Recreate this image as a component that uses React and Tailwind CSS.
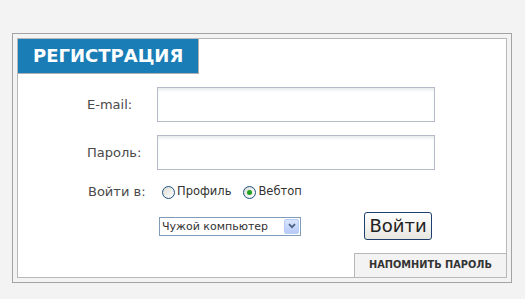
import React, { useState } from "react";

function Radio({ checked, onClick, label }) {
  return (
    <label onClick={onClick} className="flex items-center cursor-pointer">
      <span className="w-[13px] h-[13px] rounded-full border border-[#1c5180] bg-gradient-to-br from-[#dcdcd5] to-white flex items-center justify-center">
        {checked && <span className="w-[5px] h-[5px] rounded-full bg-[#21a121]" />}
      </span>
      <span className="ml-[2px] text-[11.5px] text-[#333]">{label}</span>
    </label>
  );
}

export default function App() {
  const [target, setTarget] = useState("webtop");

  return (
    <div
      className="min-h-screen bg-[#f3f3f3] pt-[33px] pl-[12px]"
      style={{ fontFamily: '"DejaVu Sans", Verdana, sans-serif' }}
    >
      <div className="w-[500px] h-[250px] border border-[#a3a3a3] p-[4px]">
        <div className="h-full border border-[#b8b8b8] bg-white flex flex-col">
          {/* header */}
          <div className="w-[181px] h-[35px] bg-[#1a7db6] border-r border-b border-[#b0b0b0] pl-[15px] flex items-center">
            <span className="text-white font-bold text-[18px] leading-none">РЕГИСТРАЦИЯ</span>
          </div>

          {/* email */}
          <div className="flex items-center mt-[13px] pl-[69px]">
            <span className="w-[70px] text-[13px] text-[#4a4a4a]">E-mail:</span>
            <input className="w-[278px] h-[35px] border border-[#b7bac9] bg-white shadow-[inset_0_3px_3px_-1px_rgba(60,80,100,0.12)] outline-none px-2 text-[13px]" />
          </div>

          {/* password */}
          <div className="flex items-center mt-[13px] pl-[69px]">
            <span className="w-[70px] text-[13px] text-[#4a4a4a]">Пароль:</span>
            <input type="password" className="w-[278px] h-[35px] border border-[#b7bac9] bg-white shadow-[inset_0_3px_3px_-1px_rgba(60,80,100,0.12)] outline-none px-2 text-[13px]" />
          </div>

          {/* radios */}
          <div className="flex items-center mt-[12px] h-[20px] pl-[70px]">
            <span className="w-[74px] text-[13px] text-[#4a4a4a]">Войти в:</span>
            <Radio checked={target === "profile"} onClick={() => setTarget("profile")} label="Профиль" />
            <span className="w-[12px]" />
            <Radio checked={target === "webtop"} onClick={() => setTarget("webtop")} label="Вебтоп" />
          </div>

          {/* select + button */}
          <div className="flex items-center mt-[10px] h-[28px] pl-[141px]">
            <div className="w-[142px] h-[19px] border border-[#7f9db9] bg-white flex items-center">
              <span className="flex-1 pl-[2px] text-[11px] text-[#333] leading-none">Чужой компьютер</span>
              <span className="w-[15px] h-[15px] mr-[1px] rounded-[2px] bg-gradient-to-b from-[#d9e5fd] to-[#b7cbf7] border border-[#b9cdf6] flex items-center justify-center">
                <svg width="8" height="6" viewBox="0 0 8 6">
                  <path d="M1 1.2 L4 4.2 L7 1.2" stroke="#4d6185" strokeWidth="1.8" fill="none" />
                </svg>
              </span>
            </div>
            <button className="ml-[63px] w-[68px] h-[28px] rounded-[3px] border border-[#1c3f6e] bg-gradient-to-b from-white to-[#e8e7e0] text-[18px] text-[#222] leading-none">
              Войти
            </button>
          </div>

          {/* reminder tab */}
          <div className="mt-auto flex justify-end">
            <button className="w-[152px] h-[24px] border-t border-l border-[#b8b8b8] bg-[#f3f3f3] text-[9.8px] font-bold text-[#333]">
              НАПОМНИТЬ ПАРОЛЬ
            </button>
          </div>
        </div>
      </div>
    </div>
  );
}
